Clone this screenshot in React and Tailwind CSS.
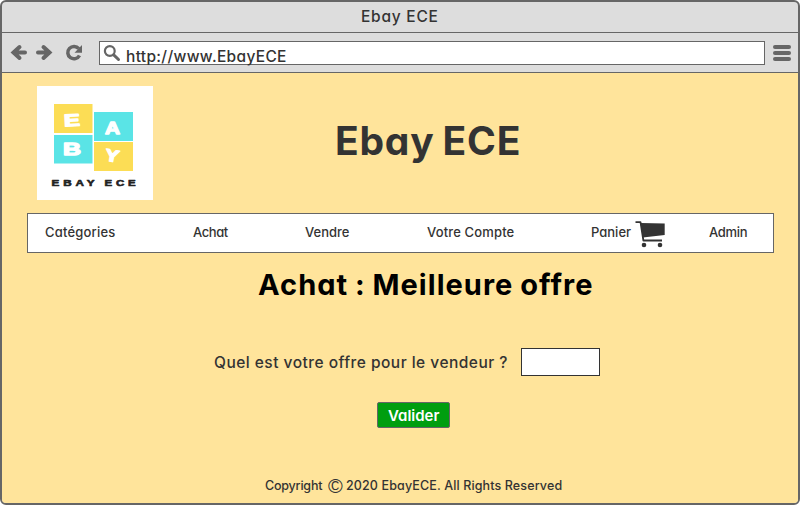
import React from "react";

function Logo() {
  return (
    <svg className="block h-[114px] w-[116px]" viewBox="0 0 116 114">
      <rect width="116" height="114" fill="#fff" />
      <rect x="17" y="18" width="38.5" height="29" fill="#fcdd55" />
      <rect x="57" y="26" width="39" height="29" fill="#5ae4e6" />
      <rect x="17" y="49" width="38.5" height="28.5" fill="#5ae4e6" />
      <rect x="57" y="56" width="39" height="29" fill="#fcdd55" />
      <g fill="#fff" stroke="#fff" strokeWidth="1.3" strokeLinejoin="round" fontFamily="'Liberation Sans'" fontWeight="700" fontSize="17" textAnchor="middle">
        <text x="35" y="40" textLength="16" lengthAdjust="spacingAndGlyphs" transform="rotate(-3 35 34)">E</text>
        <text x="75.500" y="48" textLength="15" lengthAdjust="spacingAndGlyphs">A</text>
        <text x="35" y="68.500" textLength="18" lengthAdjust="spacingAndGlyphs">B</text>
        <text x="75" y="75.500" textLength="14" lengthAdjust="spacingAndGlyphs" transform="rotate(10 75 70)">Y</text>
      </g>
      <g fill="#222" stroke="#222" strokeWidth=".6" strokeLinejoin="round" fontFamily="'Liberation Sans'" fontWeight="700" fontSize="9" letterSpacing="3">
        <text x="14.500" y="100.300" textLength="47" lengthAdjust="spacingAndGlyphs">EBAY</text>
        <text x="67.500" y="100.300" textLength="35" lengthAdjust="spacingAndGlyphs">ECE</text>
      </g>
    </svg>
  );
}

function Cart() {
  return (
    <svg className="block h-[27px] w-[30px]" viewBox="0 0 30 27">
      <path d="M0.5 1.2H5.500L8.400 19.500H27" fill="none" stroke="#333" strokeWidth="1.8" strokeLinejoin="round" />
      <path d="M5.500 2L29.700 2.600V14L7.800 16.600Z" fill="#333" />
      <circle cx="9" cy="24" r="2.3" fill="#333" />
      <circle cx="25" cy="24" r="2.3" fill="#333" />
    </svg>
  );
}

function Toolbar() {
  return (
    <div className="flex h-[40px] border-b border-[#666] pl-2 pt-2">
      <svg className="mt-[1px] h-5 w-[76px]" viewBox="10 42 76 20" fill="none" stroke="#666" strokeWidth="4" strokeLinecap="round">
        <path d="M14 52.5H25M19.5 47L13.5 52.5L19.5 58" />
        <path d="M38 52.5H49M43.500 47L49.500 52.500L43.500 58" />
        <path d="M78.800 48.700A6.200 6.200 0 1 0 79.500 55.500" strokeWidth="3.500" strokeLinecap="butt" />
        <path d="M82 45V52.700H74.500Z" fill="#666" stroke="none" />
      </svg>
      <div className="ml-[13px] flex h-6 w-[666px] border border-[#666] bg-white">
        <svg className="ml-[3px] mt-[2px] h-[18px] w-[18px]" viewBox="0 0 18 18" fill="none" stroke="#666">
          <circle cx="6.800" cy="7" r="4.900" strokeWidth="2.200" />
          <path d="M10.700 10.900L15.500 15.500" strokeWidth="3" strokeLinecap="round" />
        </svg>
        <span className="ml-[5px] mt-[3px] text-[15.5px] leading-[24px] tracking-[0.33px]">http://www.EbayECE</span>
      </div>
      <div className="ml-[8px] mt-[4px] flex w-[18px] flex-col gap-[2px]">
        <i className="h-1 rounded-full bg-[#666]" />
        <i className="h-1 rounded-full bg-[#666]" />
        <i className="h-1 rounded-full bg-[#666]" />
      </div>
    </div>
  );
}

export default function App() {
  return (
    <div className="h-[505px] w-[800px] bg-white font-['Inter','Liberation_Sans',sans-serif] font-medium whitespace-nowrap text-[#333] [font-feature-settings:'cv11']">
      <div className="flex h-full flex-col overflow-hidden rounded-md border-2 border-[#666] bg-[#ddd]">
        <header className="h-[31px] border-b border-[#666] pl-[359px] text-[15.5px] leading-[30px] tracking-[0.75px]">Ebay ECE</header>
        <Toolbar />
        <main className="flex-1 bg-[#ffe49b] pl-[25px] pt-[13px]">
          <div className="flex h-[127px] pl-[10px]">
            <Logo />
            <h1 className="ml-[182px] mt-[30px] text-[39px] leading-[50px] font-bold tracking-[0.8px] [word-spacing:-2px]">Ebay ECE</h1>
          </div>
          <nav className="flex h-[40px] w-[747px] border border-[#666] bg-white pl-[17px] text-[13px] leading-[37px]">
            <span className="w-[148px] tracking-[0.2px]">Catégories</span>
            <span className="w-[112px] tracking-[-0.4px]">Achat</span>
            <span className="w-[122px]">Vendre</span>
            <span className="w-[164px] tracking-[0.15px]">Votre Compte</span>
            <span className="w-[44px]">Panier</span>
            <span className="w-[74px] pt-[7px]"><Cart /></span>
            <span className="tracking-[-0.3px]">Admin</span>
          </nav>
          <h2 className="mt-[11px] h-[40px] pl-[231px] text-[29px] leading-[41px] font-bold tracking-[1.05px] text-black [word-spacing:-1.2px]">Achat : Meilleure offre</h2>
          <div className="mt-[44px] flex h-[28px]">
            <label className="w-[494px] pl-[187px] text-[15.5px] leading-[29px] tracking-[0.48px]">Quel est votre offre pour le vendeur ?</label>
            <div className="h-[28px] w-[79px] border border-[#333] bg-white" />
          </div>
          <button className="ml-[350px] mt-[26px] block h-[26px] w-[73px] rounded-[2px] border border-[#666] bg-[#009e0f] pl-[10px] text-left text-[15px] leading-[23px] font-semibold text-white">Valider</button>
          <footer className="mt-[48px] flex pl-[238px] text-[12.500px] leading-[20px]">
            <span className="w-[63px] tracking-[-0.2px]">Copyright</span>
            <span className="w-[18px] font-['Liberation_Sans',sans-serif] text-[20px] font-normal">©</span>
            <span className="tracking-[0.13px]">2020 EbayECE. All Rights Reserved</span>
          </footer>
        </main>
      </div>
    </div>
  );
}
